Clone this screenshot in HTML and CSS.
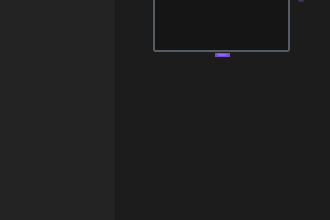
FILE: index.html
```html
<!DOCTYPE html>
<html lang="en">
<head>
    <meta charset="UTF-8">
    <meta name="viewport" content="width=device-width, initial-scale=1.0">
    <title>Editor</title>
    <link rel="stylesheet" href="styles.css">
</head>
<body>
    <div class="app">
        <div class="sidebar"></div>
        <div class="canvas">
            <div class="frame-wrap">
                <div class="frame"></div>
                <div class="frame-tag">frame</div>
            </div>
            <div class="handle"></div>
        </div>
    </div>
</body>
</html>
```

FILE: styles.css
```css
body {
    margin: 0;
    background: #1c1c1c;
    font-family: "Inter", "Liberation Sans", sans-serif;
}

.app {
    display: flex;
    width: 330px;
    height: 220px;
    overflow: hidden;
}

.sidebar {
    width: 115px;
    background: #232323;
    border-right: 1px solid #1a1a1a;
}

.canvas {
    flex: 1;
    background: #1c1c1c;
    position: relative;
}

.frame-wrap {
    display: flex;
    flex-direction: column;
    align-items: center;
    margin-left: 37px;
    width: 137px;
}

.frame {
    width: 133px;
    height: 52px;
    margin-top: -2px;
    background: #151515;
    border: 2px solid #565c63;
    border-top: none;
    border-radius: 0 0 3px 3px;
}

.frame-tag {
    margin-top: 1px;
    margin-left: 1px;
    width: 15px;
    height: 4px;
    background: #7a48dc;
    color: #b49af0;
    font-size: 3px;
    line-height: 4px;
    text-align: center;
    overflow: hidden;
}

.handle {
    position: absolute;
    top: -2px;
    left: 182px;
    width: 6px;
    height: 4px;
    border-radius: 2px;
    background: #3a3550;
}
```
